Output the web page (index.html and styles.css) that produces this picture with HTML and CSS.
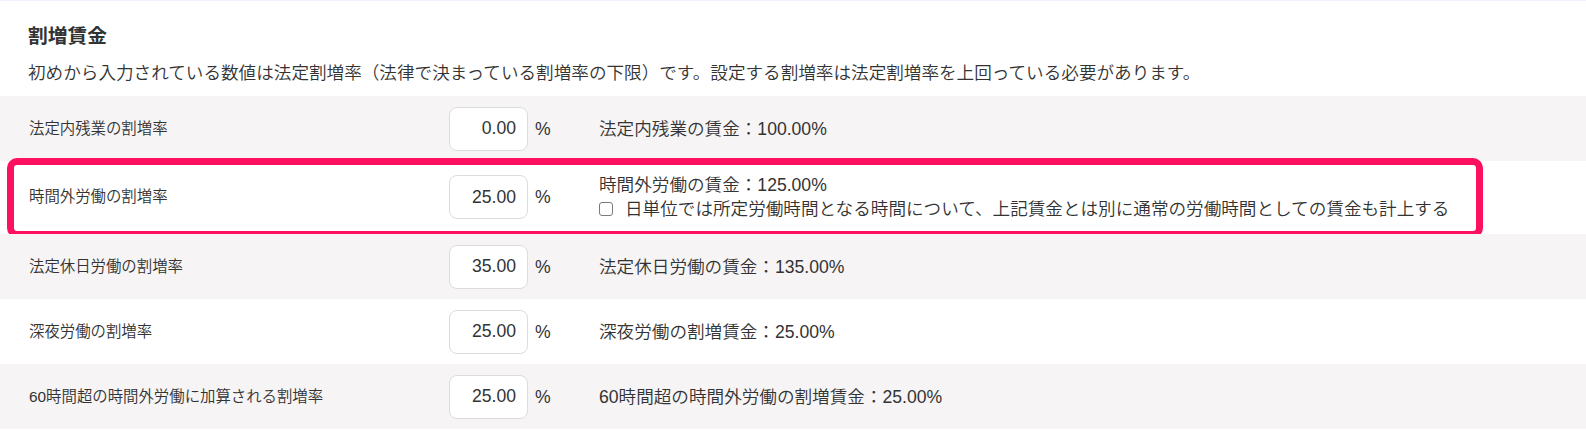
FILE: index.html
```html
<!DOCTYPE html>
<html lang="ja">
<head>
<meta charset="utf-8">
<title>割増賃金</title>
<link rel="stylesheet" href="styles.css">
</head>
<body>
<section class="panel">
  <header class="panel-head">
    <h2 class="panel-title">割増賃金</h2>
    <p class="panel-note">初めから入力されている数値は法定割増率（法律で決まっている割増率の下限）です。設定する割増率は法定割増率を上回っている必要があります。</p>
  </header>

  <div class="rate-list">
    <div class="rate-row shaded">
      <div class="rate-label">法定内残業の割増率</div>
      <input class="rate-input" type="text" value="0.00">
      <div class="rate-unit">%</div>
      <div class="rate-result">法定内残業の賃金：100.00%</div>
    </div>

    <div class="rate-row tall">
      <div class="rate-label">時間外労働の割増率</div>
      <input class="rate-input" type="text" value="25.00">
      <div class="rate-unit">%</div>
      <div class="rate-result">
        <div>時間外労働の賃金：125.00%</div>
        <label class="check-line"><input class="check-box" type="checkbox"><span>日単位では所定労働時間となる時間について、上記賃金とは別に通常の労働時間としての賃金も計上する</span></label>
      </div>
      <div class="highlight"></div>
    </div>

    <div class="rate-row shaded">
      <div class="rate-label">法定休日労働の割増率</div>
      <input class="rate-input" type="text" value="35.00">
      <div class="rate-unit">%</div>
      <div class="rate-result">法定休日労働の賃金：135.00%</div>
    </div>

    <div class="rate-row">
      <div class="rate-label">深夜労働の割増率</div>
      <input class="rate-input" type="text" value="25.00">
      <div class="rate-unit">%</div>
      <div class="rate-result">深夜労働の割増賃金：25.00%</div>
    </div>

    <div class="rate-row shaded">
      <div class="rate-label">60時間超の時間外労働に加算される割増率</div>
      <input class="rate-input" type="text" value="25.00">
      <div class="rate-unit">%</div>
      <div class="rate-result">60時間超の時間外労働の割増賃金：25.00%</div>
    </div>
  </div>
</section>
</body>
</html>
```

FILE: styles.css
```css
* {
  box-sizing: border-box;
}

html, body {
  margin: 0;
  padding: 0;
  background: #ffffff;
}

body {
  font-family: "Liberation Sans", "Noto Sans CJK JP", sans-serif;
  font-weight: 350;
  color: #333333;
  font-size: 17.6px;
}

.panel {
  border-top: 1px solid #eef2fb;
  width: 1586px;
}

.panel-head {
  padding: 21px 29px 0 28px;
}

.panel-title {
  margin: 0;
  font-size: 19.8px;
  line-height: 28px;
  font-weight: bold;
}

.panel-note {
  margin: 10px 0 10px 0;
  font-size: 17.6px;
  line-height: 26px;
}

.rate-list {
  display: flex;
  flex-direction: column;
}

.rate-row {
  position: relative;
  display: grid;
  grid-template-columns: 420px 79px 71px 1fr;
  align-items: center;
  padding: 10.5px 29px;
  min-height: 65px;
}

.rate-row.shaded {
  background: #f6f4f5;
}

.rate-row.tall {
  padding: 12px 29px 13px;
}

.rate-label {
  font-size: 15.4px;
  line-height: 22px;
}

.rate-input {
  width: 79px;
  height: 44px;
  border: 1px solid #dcdcdc;
  border-radius: 8px;
  background: #ffffff;
  padding: 0 11px 0 6px;
  text-align: right;
  font-family: "Liberation Sans", sans-serif;
  font-size: 17.6px;
  color: #333333;
  outline: none;
}

.rate-unit {
  padding-left: 7px;
  font-size: 17.6px;
  line-height: 24px;
}

.rate-result {
  font-size: 17.6px;
  line-height: 24px;
}

.check-line {
  display: flex;
  align-items: center;
}

.check-box {
  appearance: none;
  -webkit-appearance: none;
  width: 14px;
  height: 14px;
  margin: 0 12px 0 0;
  border: 1px solid #7a7a7a;
  border-radius: 3px;
  background: #ffffff;
  flex: none;
}

/* attention frame drawn over the overtime row */
.highlight {
  position: absolute;
  top: -3px;
  bottom: -4px;
  left: 7px;
  right: 103px;
  border: 7px solid #fe1060;
  border-radius: 10px;
  pointer-events: none;
}
```
